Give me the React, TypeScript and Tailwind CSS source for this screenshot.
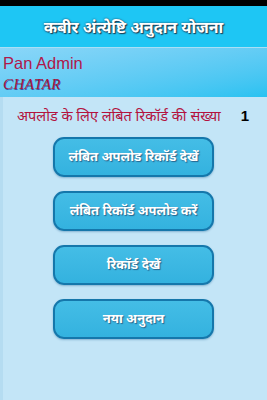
import React from "react";

const btns = [
  "लंबित अपलोड रिकॉर्ड देखें",
  "लंबित रिकॉर्ड अपलोड करें",
  "रिकॉर्ड देखें",
  "नया अनुदान",
];

export default function App() {
  return (
    <div
      className="w-[267px] h-[400px] flex flex-col overflow-hidden bg-[#c3e5f7]"
      style={{ fontFamily: '"Noto Sans", "Liberation Sans", sans-serif' }}
    >
      <div className="h-[6px] bg-black shrink-0" />
      <div className="h-[41px] shrink-0 bg-[#1ec6f4] flex items-center justify-center">
        <span className="text-white font-bold text-[16px] leading-none [text-shadow:1px_1px_1px_#1d3b52,0_0_2px_#1d3b52]">
          कबीर अंत्येष्टि अनुदान योजना
        </span>
      </div>
      <div className="h-[50px] shrink-0 bg-gradient-to-br from-[#8ad6f8] to-[#27c2f1] border-t border-[#a9dff5] pl-[3px] flex flex-col justify-center">
        <div className="text-[#b0174a] text-[16.5px] leading-[22px]" style={{ fontFamily: '"Liberation Sans", sans-serif' }}>
          Pan Admin
        </div>
        <div
          className="text-[#a3163e] text-[15px] italic leading-[20px] tracking-[0.5px] [text-shadow:0.5px_0.5px_0_#3a4fa0]"
          style={{ fontFamily: '"Liberation Serif", serif' }}
        >
          CHATAR
        </div>
      </div>
      <div className="flex-1 border-l-[3px] border-[#b5dcf1] flex flex-col">
        <div className="flex items-center h-[38px] pl-[14px] pr-[18px]">
          <span className="text-[#b3123e] text-[14.5px] flex-1 whitespace-nowrap">
            अपलोड के लिए लंबित रिकॉर्ड की संख्या
          </span>
          <span className="text-black font-bold text-[15px]" style={{ fontFamily: '"Liberation Sans", sans-serif' }}>1</span>
        </div>
        <div className="flex flex-col items-center gap-[14px] pt-[2px] pr-[3px]">
          {btns.map((b) => (
            <div
              key={b}
              className="w-[161px] h-[40px] rounded-[11px] border-2 border-[#1577ab] bg-gradient-to-b from-[#44bde6] to-[#33b2df] flex items-center justify-center shadow-[0_1px_2px_rgba(20,90,140,0.35)]"
            >
              <span className="text-white font-bold text-[13px] [text-shadow:1px_1px_1px_#27628a]">
                {b}
              </span>
            </div>
          ))}
        </div>
      </div>
    </div>
  );
}
